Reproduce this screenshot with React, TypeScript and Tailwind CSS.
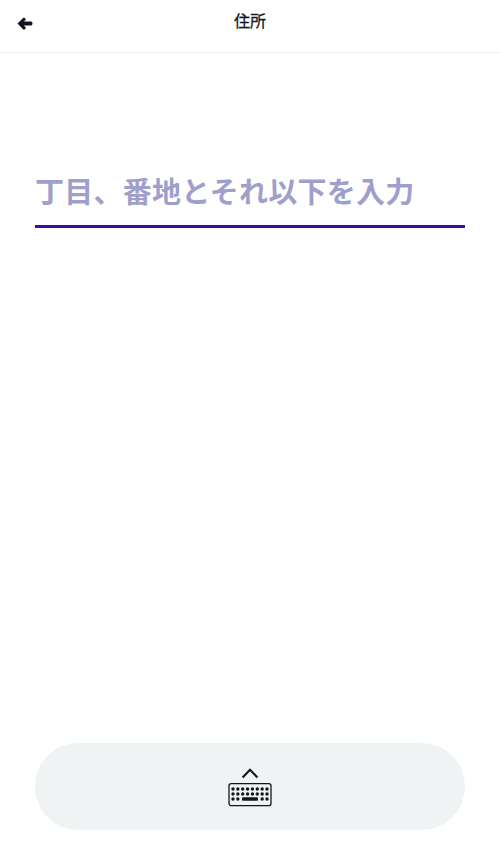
const FONT = "font-['Liberation_Sans','Noto_Sans_CJK_JP',sans-serif]";

const KEY_XS = [6, 10.86, 15.72, 20.58, 25.44, 30.3, 35.16, 40];

function BackArrow() {
  return (
    <svg width="16" height="14" viewBox="0 0 16 14" fill="#14161f">
      <path d="M0.5 6.5 L6 1 Q7 0.3 7.8 1 L8.6 1.8 Q9 2.6 8.6 3 L6.8 4.4 H14 Q15.5 4.4 15.5 6.5 Q15.5 8.6 14 8.6 H6.8 L8.6 10.2 Q9 11 8.6 11.5 L7.8 12.3 Q7 13 6 12.3 Z" />
    </svg>
  );
}

function KeyboardIcon() {
  return (
    <svg width="46" height="40" viewBox="0 0 46 40" fill="none">
      <path d="M15.6 10.4 L23 2.8 L30.4 10.4" stroke="#14161f" strokeWidth="2.2" />
      <rect x="2" y="16.6" width="42" height="22" rx="2.2" stroke="#14161f" strokeWidth="1.3" />
      {KEY_XS.map((x) => (
        <circle key={`a${x}`} cx={x} cy="22" r="1.7" fill="#14161f" />
      ))}
      {KEY_XS.map((x) => (
        <circle key={`b${x}`} cx={x} cy="27" r="1.7" fill="#14161f" />
      ))}
      {[KEY_XS[0], KEY_XS[1], KEY_XS[6], KEY_XS[7]].map((x) => (
        <circle key={`c${x}`} cx={x} cy="32" r="1.7" fill="#14161f" />
      ))}
      <rect x="15" y="30.3" width="16" height="3.4" rx="1" fill="#14161f" />
    </svg>
  );
}

export default function App() {
  return (
    <div className={`h-[865px] w-full flex flex-col bg-white ${FONT}`}>
      <header className="h-[53px] shrink-0 flex items-center relative border-b border-[#efefef]">
        <button className="ml-[17px] mb-[5px] flex">
          <BackArrow />
        </button>
        <h1 className="absolute left-0 right-0 top-[12px] text-center text-[16px] leading-[20px] font-normal [-webkit-text-stroke:0.3px_#14161f] text-[#14161f]">
          住所
        </h1>
      </header>

      <main className="flex-1 px-[35px] pt-[119px]">
        <div className="h-[56px] border-b-[3px] border-[#4308a5] text-[29px] leading-[42px] tracking-[0.25px] font-bold text-[#9f9fcc] whitespace-nowrap">
          丁目、番地とそれ以下を入力
        </div>
      </main>

      <div className="px-[35px] pb-[35px]">
        <button className="w-full h-[87px] rounded-[44px] bg-[#eff3f3] flex items-center justify-center pt-[1px]">
          <KeyboardIcon />
        </button>
      </div>
    </div>
  );
}
